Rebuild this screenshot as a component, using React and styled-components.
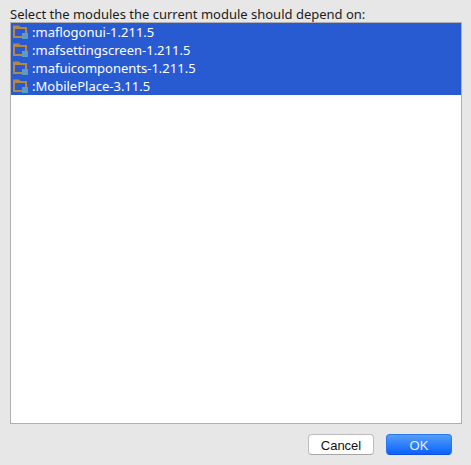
import React, { useState } from "react";
import styled, { createGlobalStyle } from "styled-components";

const GlobalStyle = createGlobalStyle`
  *, *::before, *::after { box-sizing: border-box; }
  body {
    margin: 0;
    background: #e7e7e7;
  }
`;

const Dialog = styled.form`
  display: flex;
  flex-direction: column;
  min-height: 100vh;
  padding: 6px 9px 10px 10px;
  font-family: "Noto Sans", "Open Sans", sans-serif;
  font-size: 13px;
  color: #1c1c1c;
`;

const Prompt = styled.label`
  line-height: 16px;
  white-space: nowrap;
`;

const ModuleList = styled.ul`
  flex: 1;
  margin: 0;
  padding: 0;
  list-style: none;
  background: #fff;
  border: 1px solid #b0b0b0;
  outline: none;
`;

const ModuleRow = styled.li`
  display: flex;
  align-items: center;
  gap: 4px;
  height: 18px;
  padding-left: 1px;
  line-height: 18px;
  white-space: nowrap;
  cursor: default;
  background: ${({ $selected }) => ($selected ? "#285bd1" : "transparent")};
  color: ${({ $selected }) => ($selected ? "#fff" : "#1c1c1c")};
`;

const Icon = styled.svg`
  flex: none;
  width: 16px;
  height: 16px;
`;

const Actions = styled.div`
  display: flex;
  justify-content: flex-end;
  gap: 12px;
  padding: 10px 10px 0 0;
`;

const PushButton = styled.button`
  width: 66px;
  height: 21px;
  padding: 2px 0 0;
  border: 1px solid ${({ $primary }) => ($primary ? "#2a78f0" : "#bdbdbd")};
  border-bottom-color: ${({ $primary }) => ($primary ? "#1050dc" : "#a6a6a6")};
  border-radius: 4px;
  background: ${({ $primary }) =>
    $primary ? "linear-gradient(#549efa, #0a62fc)" : "#fff"};
  color: ${({ $primary }) => ($primary ? "#e8f1ff" : "#111")};
  font-family: "Liberation Sans", Arial, sans-serif;
  font-size: 13px;
  line-height: 17px;
`;

function ModuleIcon() {
  return (
    <Icon viewBox="0 0 16 16" aria-hidden="true">
      <path
        fill="#b5873f"
        fillRule="evenodd"
        d="M1 1.5h6l1.5 1.5H15V14H1zM3 5V12h10V5z"
      />
      <path fill="#5d9bc5" d="M10 9h6v6h-6z" />
    </Icon>
  );
}

const modules = [
  ":maflogonui-1.211.5",
  ":mafsettingscreen-1.211.5",
  ":mafuicomponents-1.211.5",
  ":MobilePlace-3.11.5",
];

export default function App() {
  const [selected, setSelected] = useState(modules);
  const toggle = (name) =>
    setSelected((now) =>
      now.includes(name) ? now.filter((n) => n !== name) : [...now, name]
    );

  return (
    <>
      <GlobalStyle />
      <Dialog onSubmit={(event) => event.preventDefault()}>
        <Prompt id="modules-label">
          Select the modules the current module should depend on:
        </Prompt>
        <ModuleList
          role="listbox"
          aria-multiselectable="true"
          aria-labelledby="modules-label"
          tabIndex={0}
        >
          {modules.map((name) => (
            <ModuleRow
              key={name}
              role="option"
              aria-selected={selected.includes(name)}
              $selected={selected.includes(name)}
              onClick={() => toggle(name)}
            >
              <ModuleIcon />
              {name}
            </ModuleRow>
          ))}
        </ModuleList>
        <Actions>
          <PushButton type="button">Cancel</PushButton>
          <PushButton type="submit" $primary>
            OK
          </PushButton>
        </Actions>
      </Dialog>
    </>
  );
}
